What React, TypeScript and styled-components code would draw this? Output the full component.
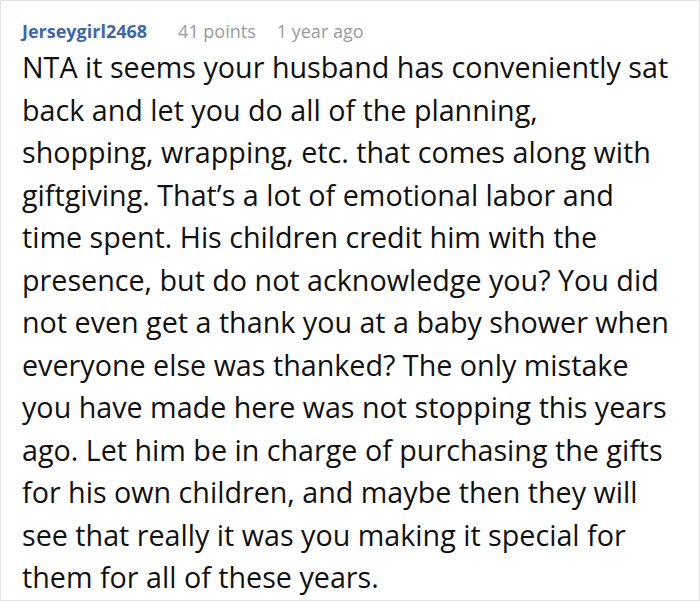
import React from "react";
import styled, { createGlobalStyle } from "styled-components";

const Global = createGlobalStyle`
  html, body { margin: 0; padding: 0; background: #fff; }
  body { width: 700px; height: 601px; overflow: hidden; }
`;

const Card = styled.div`
  box-sizing: border-box;
  width: 700px;
  height: 601px;
  border: 1px solid #e2e2e2;
  padding: 17px 20px 0 21px;
  font-family: "Open Sans", "Noto Sans", sans-serif;
  background: #fff;
`;

const Meta = styled.div`
  display: flex;
  align-items: baseline;
  font-size: 18px;
  line-height: 26px;
`;

const User = styled.span`
  color: #3f67a8;
  font-weight: 700;
  margin-right: 31px;
`;

const Info = styled.span<{ $gap?: number }>`
  color: #9a9a9a;
  margin-right: ${(p) => p.$gap ?? 0}px;
`;

const Body = styled.p`
  margin: 2px 0 0;
  font-size: 28.7px;
  line-height: 42.5px;
  color: #111;
`;

const Line = styled.span`
  display: block;
  white-space: nowrap;
`;

const lines = [
  "NTA it seems your husband has conveniently sat",
  "back and let you do all of the planning,",
  "shopping, wrapping, etc. that comes along with",
  "giftgiving. That’s a lot of emotional labor and",
  "time spent. His children credit him with the",
  "presence, but do not acknowledge you? You did",
  "not even get a thank you at a baby shower when",
  "everyone else was thanked? The only mistake",
  "you have made here was not stopping this years",
  "ago. Let him be in charge of purchasing the gifts",
  "for his own children, and maybe then they will",
  "see that really it was you making it special for",
  "them for all of these years.",
];

export default function App() {
  return (
    <>
      <Global />
      <Card>
        <Meta>
          <User>Jerseygirl2468</User>
          <Info $gap={21}>41 points</Info>
          <Info>1 year ago</Info>
        </Meta>
        <Body>
          {lines.map((l, i) => (
            <Line key={i}>{l}</Line>
          ))}
        </Body>
      </Card>
    </>
  );
}
